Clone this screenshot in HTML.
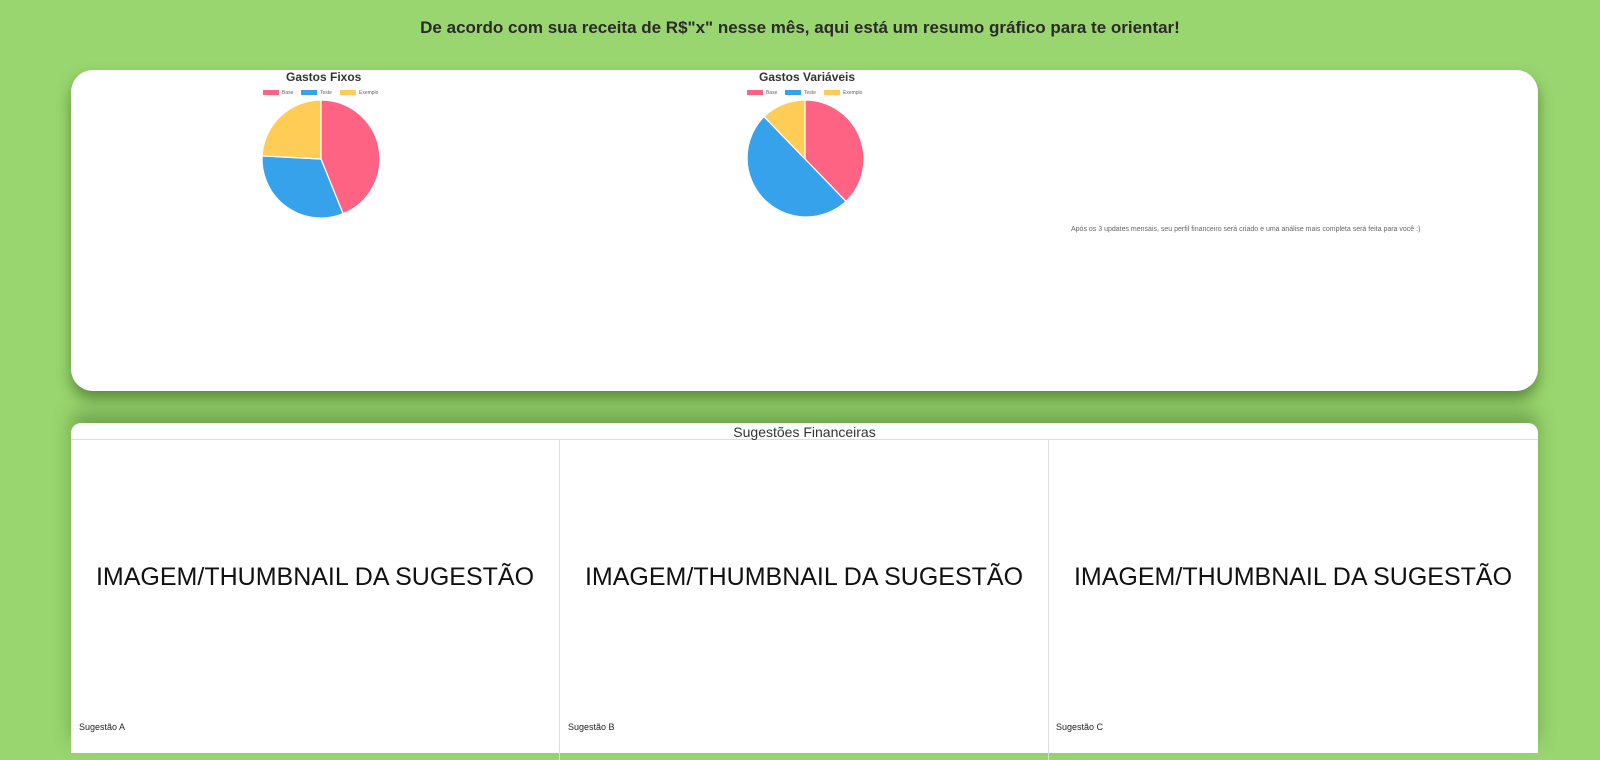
<!DOCTYPE html>
<html><head><meta charset="utf-8"><style>
html,body{margin:0;padding:0;}
body{width:1600px;height:730px;overflow:hidden;background:#9ad66f;font-family:"Liberation Sans",sans-serif;color:#222;position:relative;}
h1{position:absolute;top:18px;left:0;width:1600px;text-align:center;font-size:17px;font-weight:bold;margin:0;color:#2a2a2a;}
.card1{position:absolute;left:71px;top:70px;width:1467px;height:321px;background:#fff;border-radius:22px;box-shadow:0 8px 14px rgba(40,80,20,.55);}
.card2{position:absolute;left:71px;top:423px;width:1467px;height:330px;background:#fff;box-shadow:0 -12px 18px rgba(60,110,40,.45);border-radius:10px 10px 0 0;}
.hdr{height:16px;border-bottom:1px solid #ddd;text-align:center;font-size:14px;line-height:18px;color:#333;}
.col{position:absolute;top:17px;width:488px;height:320px;border-right:1px solid #ddd;}
.col .big{position:absolute;top:123px;left:0;width:100%;text-align:center;font-size:25px;color:#111;}
.col .lab{position:absolute;top:282px;left:8px;font-size:9px;color:#222;}
.note{position:absolute;left:1000px;top:156px;font-size:7px;color:#666;}
.t{position:absolute;font-size:12px;font-weight:bold;color:#333;}
</style></head><body>
<h1>De acordo com sua receita de R$"x" nesse mês, aqui está um resumo gráfico para te orientar!</h1>
<div class="card1">
<div class="t" style="left:215px;top:0px">Gastos Fixos</div>
<div class="t" style="left:688px;top:0px">Gastos Variáveis</div>
<div class="note">Após os 3 updates mensais, seu perfil financeiro será criado e uma análise mais completa será feita para você :)</div>
</div>
<svg width="1600" height="730" style="position:absolute;left:0;top:0">
<g font-size="5" fill="#666" font-family="Liberation Sans">
<rect x="263" y="90" width="16" height="5" fill="#ff6384"/><text x="282" y="94">Base</text>
<rect x="301" y="90" width="16" height="5" fill="#36a2eb"/><text x="320" y="94">Teste</text>
<rect x="340" y="90" width="16" height="5" fill="#ffcd56"/><text x="359" y="94">Exemplo</text>
<rect x="747" y="90" width="16" height="5" fill="#ff6384"/><text x="766" y="94">Base</text>
<rect x="785" y="90" width="16" height="5" fill="#36a2eb"/><text x="804" y="94">Teste</text>
<rect x="824" y="90" width="16" height="5" fill="#ffcd56"/><text x="843" y="94">Exemplo</text>
</g>
<g stroke="#fff" stroke-width="1.2">
<path d="M321 159 L321 100 A59 59 0 0 1 343.1 213.7 Z" fill="#ff6384"/>
<path d="M321 159 L343.1 213.7 A59 59 0 0 1 262.1 155.9 Z" fill="#36a2eb"/>
<path d="M321 159 L262.1 155.9 A59 59 0 0 1 321 100 Z" fill="#ffcd56"/>
<path d="M805 159 L805 100 A59 59 0 0 1 846 201.4 Z" fill="#ff6384"/>
<path d="M805 159 L846 201.4 A59 59 0 0 1 764 116.6 Z" fill="#36a2eb"/>
<path d="M805 159 L764 116.6 A59 59 0 0 1 805 100 Z" fill="#ffcd56"/>
</g>
</svg>
<div class="card2">
<div class="hdr">Sugestões Financeiras</div>
<div class="col" style="left:0"><div class="big">IMAGEM/THUMBNAIL DA SUGESTÃO</div><div class="lab">Sugestão A</div></div>
<div class="col" style="left:489px"><div class="big">IMAGEM/THUMBNAIL DA SUGESTÃO</div><div class="lab">Sugestão B</div></div>
<div class="col" style="left:977px;border-right:none;width:490px"><div class="big">IMAGEM/THUMBNAIL DA SUGESTÃO</div><div class="lab">Sugestão C</div></div>
</div>
</body></html>
